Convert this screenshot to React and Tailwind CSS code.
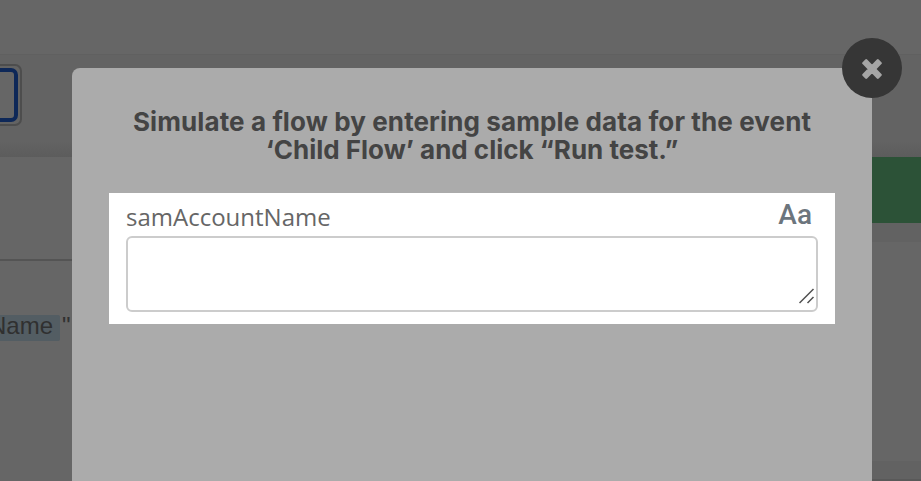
function EditorBackdrop() {
  return (
    <div className="flex h-[481px] w-[921px] flex-col overflow-hidden bg-[#666666]">
      <header className="h-[54px] shrink-0 border-b border-[#606060] bg-[#666666] box-content" />
      <div className="flex h-[102px] shrink-0 items-start bg-linear-to-b from-[#636363] from-85% to-[#5c5c5c] pt-[9px]">
        <div className="-ml-10 h-[62px] w-[62px] rounded-[7px] border-2 border-[#4d4d4d] p-0.5">
          <div className="h-[54px] w-full rounded-[7px] border-4 border-[#0e2858] bg-[#666666]" />
        </div>
      </div>
      <div className="flex flex-1 justify-between">
        <div className="flex w-[200px] flex-col">
          <div className="h-[104px] border-b-2 border-[#545454]" />
          <div className="mt-[54px] flex items-center font-['Liberation_Sans',Arial,sans-serif] text-[24px] leading-[22px] text-[#303030]">
            <span className="flex h-[26px] w-[60px] justify-end rounded-r-[2px] bg-[#535d63] pr-[7px]">Name</span>
            <span className="ml-[2px] h-[26px]">"</span>
          </div>
        </div>
        <div className="flex w-[60px] flex-col">
          <div className="h-[66px] bg-[#2c5237]" />
          <div className="h-[19px] bg-[#626262]" />
          <div className="h-[219px] bg-[#666666]" />
          <div className="h-[18px] bg-[#626262]" />
          <div className="h-[2px] bg-[#595959]" />
        </div>
      </div>
    </div>
  );
}

function CloseButton() {
  return (
    <button aria-label="Close" className="absolute -top-[30px] -right-[30px] flex size-[60px] items-center justify-center rounded-full bg-[#363636]">
      <svg viewBox="0 0 20 20" className="mt-[2px] size-5" fill="#a5a5a5" stroke="#a5a5a5" strokeWidth="2.6" strokeLinejoin="round">
        <path d="M4.2 1.5 10 7.3l5.8-5.8 2.7 2.7L12.7 10l5.8 5.8-2.7 2.7L10 12.7l-5.8 5.8-2.7-2.7L7.3 10 1.5 4.2z" />
      </svg>
    </button>
  );
}

function SampleField() {
  return (
    <div className="mx-[37px] mt-[29px] flex h-[131px] flex-col bg-white px-[17px] pt-[9px]">
      <div className="flex h-[34px] justify-between">
        <label htmlFor="account" className="font-['Open_Sans',sans-serif] text-[24px] leading-[30px] text-[#666666]">samAccountName</label>
        <span className="mr-[6px] font-[Roboto,sans-serif] text-[28px] leading-[26px] font-medium text-[#6c757d]">Aa</span>
      </div>
      <div className="relative h-[76px]">
        <textarea id="account" className="block size-full resize-none rounded-[6px] border-2 border-[#cccccc] bg-white" />
        <svg className="absolute right-[3px] bottom-[8px] h-4 w-4" viewBox="0 0 16 16" fill="none" stroke="#505050" strokeWidth="1.5">
          <path d="M.5 15 14.5 1M8.5 15l6-6" />
        </svg>
      </div>
    </div>
  );
}

export default function App() {
  return (
    <main className="relative h-[481px] w-[921px] overflow-hidden">
      <EditorBackdrop />
      <section role="dialog" className="absolute top-[68px] left-[72px] h-[413px] w-[800px] rounded-t-[8px] bg-[#ababab] pt-[40px]">
        <CloseButton />
        <h1 className="flex flex-col items-center text-center font-[Inter,sans-serif] text-[26px] leading-[28px] font-bold whitespace-nowrap text-[#444444]">
          <span className="tracking-[0.11px]">Simulate a flow by entering sample data for the event</span>
          <span>‘Child Flow’ and click “Run test.”</span>
        </h1>
        <SampleField />
      </section>
    </main>
  );
}
